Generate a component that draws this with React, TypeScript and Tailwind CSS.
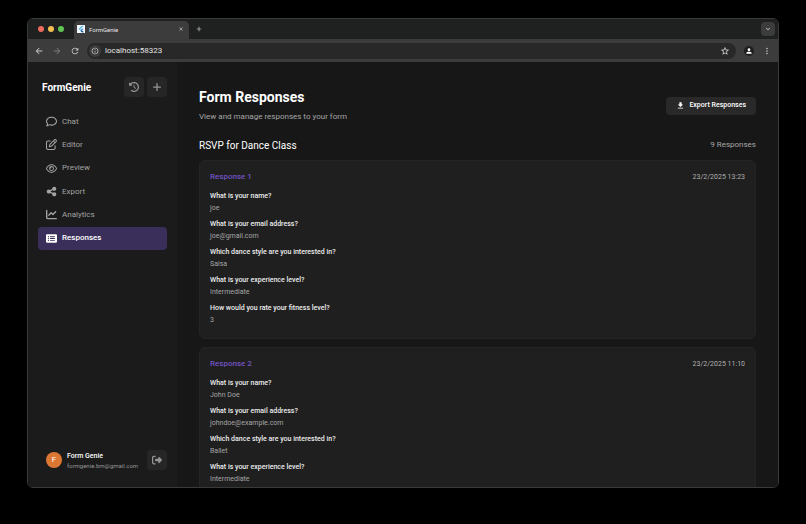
import type { ReactNode } from 'react'
import type { IconType } from 'react-icons'
import {
  FaChartLine,
  FaClockRotateLeft,
  FaPlus,
  FaRectangleList,
  FaRegComment,
  FaRegEye,
  FaRegPenToSquare,
  FaRightFromBracket,
  FaShareNodes,
} from 'react-icons/fa6'
import {
  MdArrowBack,
  MdArrowForward,
  MdAdd,
  MdClose,
  MdDownload,
  MdInfoOutline,
  MdKeyboardArrowDown,
  MdMoreVert,
  MdPerson,
  MdRefresh,
  MdStarBorder,
} from 'react-icons/md'

type NavItem = { label: string; icon: IconType; active?: boolean }
type Answer = { question: string; answer: string }
type FormResponse = { id: number; date: string; answers: Answer[] }

const navItems: NavItem[] = [
  { label: 'Chat', icon: FaRegComment },
  { label: 'Editor', icon: FaRegPenToSquare },
  { label: 'Preview', icon: FaRegEye },
  { label: 'Export', icon: FaShareNodes },
  { label: 'Analytics', icon: FaChartLine },
  { label: 'Responses', icon: FaRectangleList, active: true },
]

const questions = [
  'What is your name?',
  'What is your email address?',
  'Which dance style are you interested in?',
  'What is your experience level?',
  'How would you rate your fitness level?',
]

const toAnswers = (values: string[]): Answer[] =>
  values.map((answer, i) => ({ question: questions[i], answer }))

const responses: FormResponse[] = [
  {
    id: 1,
    date: '23/2/2025 13:23',
    answers: toAnswers(['joe', 'joe@gmail.com', 'Salsa', 'Intermediate', '3']),
  },
  {
    id: 2,
    date: '23/2/2025 11:10',
    answers: toAnswers(['John Doe', 'johndoe@example.com', 'Ballet', 'Intermediate']),
  },
]

/* ─── Browser chrome ─── */
function FlutterIcon() {
  return (
    <svg viewBox="0 0 16 16" className="size-2 shrink-0" aria-hidden="true">
      <rect width="16" height="16" fill="#f4f8fb" />
      <path d="M9.5 1.5 3 8l2 2 8.500-8.500z" fill="#62b8ea" />
      <path d="M9.500 7.500 6 11l3.500 3.500h4L10 11l3.500-3.500z" fill="#3f94d4" />
      <path d="m8 13 2-2 3.500 3.500h-4z" fill="#1d4f8c" />
    </svg>
  )
}

function TabStrip() {
  return (
    <div className="flex h-5 shrink-0 items-end bg-[#1f2120]">
      <div className="flex h-full w-[46px] items-center gap-1 pl-[10px]">
        <span className="size-[6px] rounded-full bg-[#ec6a5e]" />
        <span className="size-[6px] rounded-full bg-[#f4bf4f]" />
        <span className="size-[6px] rounded-full bg-[#61c554]" />
      </div>
      <div className="flex h-[18px] w-[115px] items-center rounded-t-[5px] bg-[#3c3c3c] pr-[5px] pb-[2px] pl-[3px]">
        <FlutterIcon />
        <span className="ml-1 flex-1 text-[6px] text-[#e6e6e6]">FormGenie</span>
        <button type="button" aria-label="Close tab">
          <MdClose className="size-[6px] text-[#e6e6e6]" />
        </button>
      </div>
      <button type="button" aria-label="New tab" className="ml-[6px] flex h-full items-center">
        <MdAdd className="size-2 text-[#dedede]" />
      </button>
      <button
        type="button"
        aria-label="Search tabs"
        className="mr-[3px] mb-[3px] ml-auto flex size-[14px] items-center justify-center rounded-[4px] bg-[#3c3c3c]"
      >
        <MdKeyboardArrowDown className="size-2 text-[#dedede]" />
      </button>
    </div>
  )
}

function Toolbar() {
  return (
    <div className="flex h-[23px] shrink-0 items-center bg-[#3c3c3c] px-[6px]">
      <div className="flex w-[53px] items-center gap-2 text-[#c8c8c8]">
        <button type="button" aria-label="Back">
          <MdArrowBack className="size-[10px]" />
        </button>
        <button type="button" aria-label="Forward" className="text-[#7a7a7a]">
          <MdArrowForward className="size-[10px]" />
        </button>
        <button type="button" aria-label="Reload">
          <MdRefresh className="size-[10px]" />
        </button>
      </div>
      <div className="flex h-4 flex-1 items-center rounded-full bg-[#282828] pr-[6px] pl-[2px]">
        <span className="flex size-3 items-center justify-center rounded-full bg-[#3c3c3c]">
          <MdInfoOutline className="size-2 text-[#d8d8d8]" />
        </span>
        <input
          type="text"
          aria-label="Address"
          defaultValue="localhost:58323"
          className="ml-1 min-w-0 flex-1 bg-transparent text-[8px] leading-3 text-[#e3e3e3] outline-none"
        />
        <button type="button" aria-label="Bookmark this page">
          <MdStarBorder className="size-[10px] text-[#d8d8d8]" />
        </button>
      </div>
      <button
        type="button"
        aria-label="Profile"
        className="ml-2 flex size-[10px] items-center justify-center rounded-full bg-[#1f1f1f]"
      >
        <MdPerson className="size-2 text-white" />
      </button>
      <button type="button" aria-label="Browser menu" className="ml-2">
        <MdMoreVert className="size-[10px] text-[#c8c8c8]" />
      </button>
    </div>
  )
}

/* ─── Sidebar ─── */
function IconButton({ label, children }: { label: string; children: ReactNode }) {
  return (
    <button
      type="button"
      aria-label={label}
      className="flex size-5 shrink-0 items-center justify-center rounded-[4px] bg-[#262626] text-[#969696]"
    >
      {children}
    </button>
  )
}

function Sidebar() {
  return (
    <aside className="flex w-[149px] shrink-0 flex-col bg-[#1b1b1b] px-[10px] pt-[15px] pb-[17px]">
      <div className="flex items-center gap-[3px] pl-1">
        <span className="flex-1 text-[10px] font-bold text-white">FormGenie</span>
        <IconButton label="History">
          <FaClockRotateLeft className="size-[10px]" />
        </IconButton>
        <IconButton label="New form">
          <FaPlus className="size-[10px]" />
        </IconButton>
      </div>

      <nav className="mt-[13px] flex h-[140px] flex-col">
        {navItems.map(({ label, icon: Icon, active }) => (
          <a
            key={label}
            href={`#${label.toLowerCase()}`}
            className={`flex flex-1 items-center gap-[5px] rounded-[4px] pl-2 text-[8px] ${
              active ? 'bg-[#3a2e5a] font-medium text-white' : 'text-[#a3a3a3]'
            }`}
          >
            <Icon className="size-[11px]" />
            {label}
          </a>
        ))}
      </nav>

      <div className="mt-auto flex items-center pl-2">
        <span className="flex size-4 items-center justify-center rounded-full bg-[#dc7633] text-[8px] text-white">
          F
        </span>
        <div className="ml-[5px] min-w-0 flex-1 pt-px leading-[9px]">
          <div className="text-[7px] font-medium text-white">Form Genie</div>
          <div className="text-[6px] text-[#969696]">formgenie.bm@gmail.com</div>
        </div>
        <IconButton label="Log out">
          <FaRightFromBracket className="size-[10px]" />
        </IconButton>
      </div>
    </aside>
  )
}

/* ─── Responses ─── */
function ResponseCard({ response }: { response: FormResponse }) {
  return (
    <article className="min-h-[179px] shrink-0 rounded-[6px] border border-[#242424] bg-[#1f1f1f] px-[10px] pt-[10px]">
      <header className="flex h-3 items-center justify-between">
        <h3 className="text-[8px] font-medium text-[#7453c4]">Response {response.id}</h3>
        <time className="text-[7px] text-[#b0b0b0]">{response.date}</time>
      </header>
      <dl className="mt-[7px] flex flex-col gap-1 text-[7px] leading-3">
        {response.answers.map(({ question, answer }) => (
          <div key={question}>
            <dt className="font-medium text-[#ededed]">{question}</dt>
            <dd className="text-[#a6a6a6]">{answer}</dd>
          </div>
        ))}
      </dl>
    </article>
  )
}

function ResponsesPage() {
  return (
    <main className="flex min-w-0 flex-1 flex-col overflow-hidden bg-[#171717] px-[22px] pt-[26px]">
      <div className="flex items-center justify-between">
        <div>
          <h1 className="text-[14px] leading-[18px] font-bold text-white">Form Responses</h1>
          <p className="mt-[5px] text-[8px] leading-3 text-[#a6a6a6]">
            View and manage responses to your form
          </p>
        </div>
        <button
          type="button"
          className="flex h-[18px] items-center gap-1 rounded-[4px] bg-[#292929] px-[10px] text-[7px] font-medium text-white"
        >
          <MdDownload className="size-[9px]" />
          Export Responses
        </button>
      </div>

      <div className="mt-[14px] flex h-4 items-center justify-between">
        <h2 className="text-[10px] text-white">RSVP for Dance Class</h2>
        <span className="text-[8px] text-[#a6a6a6]">9 Responses</span>
      </div>

      <div className="mt-[7px] flex min-h-0 flex-1 flex-col gap-2 overflow-hidden">
        {responses.map((r) => (
          <ResponseCard key={r.id} response={r} />
        ))}
      </div>
    </main>
  )
}

export default function App() {
  return (
    <div className="flex h-screen flex-col bg-black px-[27px] pt-[18px] pb-9 font-['Roboto',sans-serif]">
      <div className="flex min-h-0 flex-1 flex-col overflow-hidden rounded-[6px] border border-[#3a3a3a]">
        <TabStrip />
        <Toolbar />
        <div className="flex min-h-0 flex-1">
          <Sidebar />
          <ResponsesPage />
        </div>
      </div>
    </div>
  )
}
